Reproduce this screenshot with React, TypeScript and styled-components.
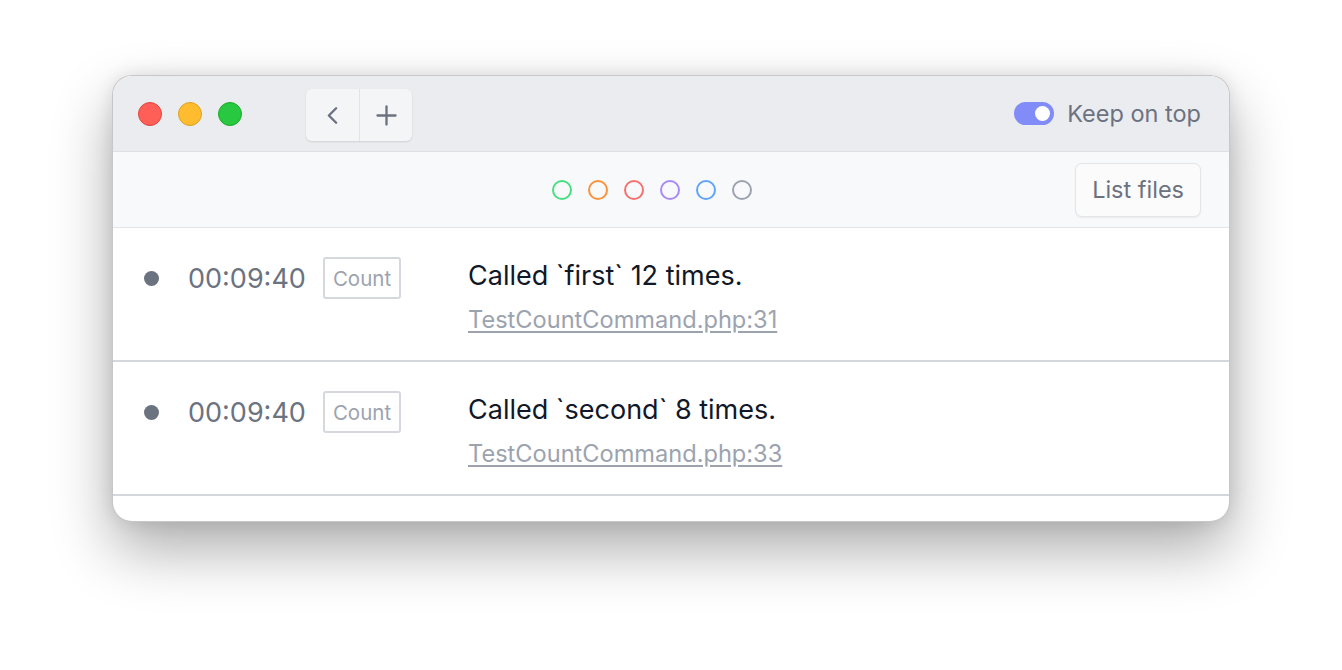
import styled, { createGlobalStyle } from 'styled-components';
import { ChevronLeft, Plus } from 'lucide-react';

const GlobalStyle = createGlobalStyle`
  html, body {
    margin: 0;
    padding: 0;
    background: #ffffff;
    font-family: Inter, "Noto Sans", "Liberation Sans", sans-serif;
  }
`;

const Page = styled.div`
  width: 1342px;
  height: 670px;
  padding: 75px 0 0 112px;
  box-sizing: border-box;
  overflow: hidden;
`;

const Window = styled.div`
  width: 1118px;
  height: 447px;
  border-radius: 20px;
  overflow: hidden;
  background: #ffffff;
  box-sizing: border-box;
  border: 1px solid rgba(0, 0, 0, 0.22);
  box-shadow: 0 28px 60px rgba(0, 0, 0, 0.32), 0 0 18px rgba(0, 0, 0, 0.1);
`;

const TitleBar = styled.div`
  height: 75px;
  display: flex;
  align-items: center;
  padding: 0 28px 0 25px;
  background: #ebecf0;
  border-bottom: 1px solid #dfe0e4;
`;

const Lights = styled.div`
  display: flex;
  gap: 16px;
`;

const Light = styled.span<{ $color: string; $edge: string }>`
  width: 24px;
  height: 24px;
  border-radius: 50%;
  box-sizing: border-box;
  background: ${(p) => p.$color};
  border: 1px solid ${(p) => p.$edge};
`;

const NavGroup = styled.div`
  display: flex;
  margin-left: 64px;
  margin-top: 3px;
  border-radius: 6px;
  background: #f4f5f7;
  box-shadow: 0 1px 2px rgba(0, 0, 0, 0.12);
  overflow: hidden;
`;

const NavButton = styled.button`
  width: 53px;
  height: 52px;
  display: flex;
  align-items: center;
  justify-content: center;
  border: none;
  background: transparent;
  color: #6b7280;
  padding: 0;
  & + & {
    border-left: 1px solid #e2e3e7;
  }
`;

const Spacer = styled.div`
  flex: 1;
`;

const Toggle = styled.span`
  width: 40px;
  height: 23px;
  border-radius: 12px;
  background: #818cf8;
  position: relative;
  &::after {
    content: '';
    position: absolute;
    top: 4px;
    right: 4px;
    width: 15px;
    height: 15px;
    border-radius: 50%;
    background: #ffffff;
  }
`;

const ToggleLabel = styled.span`
  margin-left: 13px;
  font-size: 23.5px;
  color: #6b7280;
`;

const FilterBar = styled.div`
  height: 75px;
  display: grid;
  grid-template-columns: 1fr auto 1fr;
  align-items: center;
  padding: 0 28px;
  background: #f8f9fb;
  border-bottom: 1px solid #e3e5e8;
`;

const Colors = styled.div`
  grid-column: 2;
  display: flex;
  gap: 16px;
  margin-right: 39px;
`;

const ColorRing = styled.span<{ $color: string }>`
  width: 20px;
  height: 20px;
  border-radius: 50%;
  box-sizing: border-box;
  border: 2px solid ${(p) => p.$color};
`;

const ListButton = styled.button`
  grid-column: 3;
  justify-self: end;
  height: 54px;
  padding: 0 16px;
  font-family: inherit;
  font-size: 23.5px;
  color: #6b7280;
  background: #fbfbfc;
  border: 1px solid #e3e5e8;
  border-radius: 7px;
  box-shadow: 0 1px 2px rgba(0, 0, 0, 0.06);
`;

const Row = styled.div`
  height: 134px;
  display: flex;
  align-items: flex-start;
  padding: 30px 0 0 31px;
  box-sizing: border-box;
  border-bottom: 2px solid #d4d7dc;
`;

const Meta = styled.div`
  width: 324px;
  height: 36px;
  margin-top: 2px;
  display: flex;
  align-items: center;
  flex-shrink: 0;
`;

const Dot = styled.span`
  width: 15px;
  height: 15px;
  border-radius: 50%;
  background: #6b7280;
`;

const Time = styled.span`
  margin-left: 29px;
  font-size: 27px;
  color: #6b7280;
`;

const Badge = styled.span`
  margin-left: 17px;
  height: 42px;
  padding: 0 8px;
  display: flex;
  align-items: center;
  box-sizing: border-box;
  border: 2px solid #d5d8dd;
  border-radius: 3px;
  font-size: 20.5px;
  color: #9ca3af;
`;

const Body = styled.div`
  display: flex;
  flex-direction: column;
`;

const Message = styled.div`
  font-size: 27px;
  line-height: 36px;
  color: #111827;
`;

const Origin = styled.a`
  margin-top: 11px;
  font-size: 23.6px;
  line-height: 30px;
  color: #9ca3af;
  text-decoration: underline;
  text-underline-offset: 3px;
`;

const entries = [
  { message: 'Called `first` 12 times.', origin: 'TestCountCommand.php:31' },
  { message: 'Called `second` 8 times.', origin: 'TestCountCommand.php:33' },
];

const rings = ['#4ade80', '#fb923c', '#f87171', '#a78bfa', '#60a5fa', '#9ca3af'];

export default function App() {
  return (
    <>
      <GlobalStyle />
      <Page>
        <Window>
          <TitleBar>
            <Lights>
              <Light $color="#ff5f57" $edge="#e0443e" />
              <Light $color="#febc2e" $edge="#dea123" />
              <Light $color="#28c840" $edge="#1aab29" />
            </Lights>
            <NavGroup>
              <NavButton type="button">
                <ChevronLeft size={29} strokeWidth={2} />
              </NavButton>
              <NavButton type="button">
                <Plus size={31} strokeWidth={1.8} />
              </NavButton>
            </NavGroup>
            <Spacer />
            <Toggle />
            <ToggleLabel>Keep on top</ToggleLabel>
          </TitleBar>
          <FilterBar>
            <Colors>
              {rings.map((c) => (
                <ColorRing key={c} $color={c} />
              ))}
            </Colors>
            <ListButton type="button">List files</ListButton>
          </FilterBar>
          {entries.map((e) => (
            <Row key={e.origin}>
              <Meta>
                <Dot />
                <Time>00:09:40</Time>
                <Badge>Count</Badge>
              </Meta>
              <Body>
                <Message>{e.message}</Message>
                <Origin>{e.origin}</Origin>
              </Body>
            </Row>
          ))}
        </Window>
      </Page>
    </>
  );
}
